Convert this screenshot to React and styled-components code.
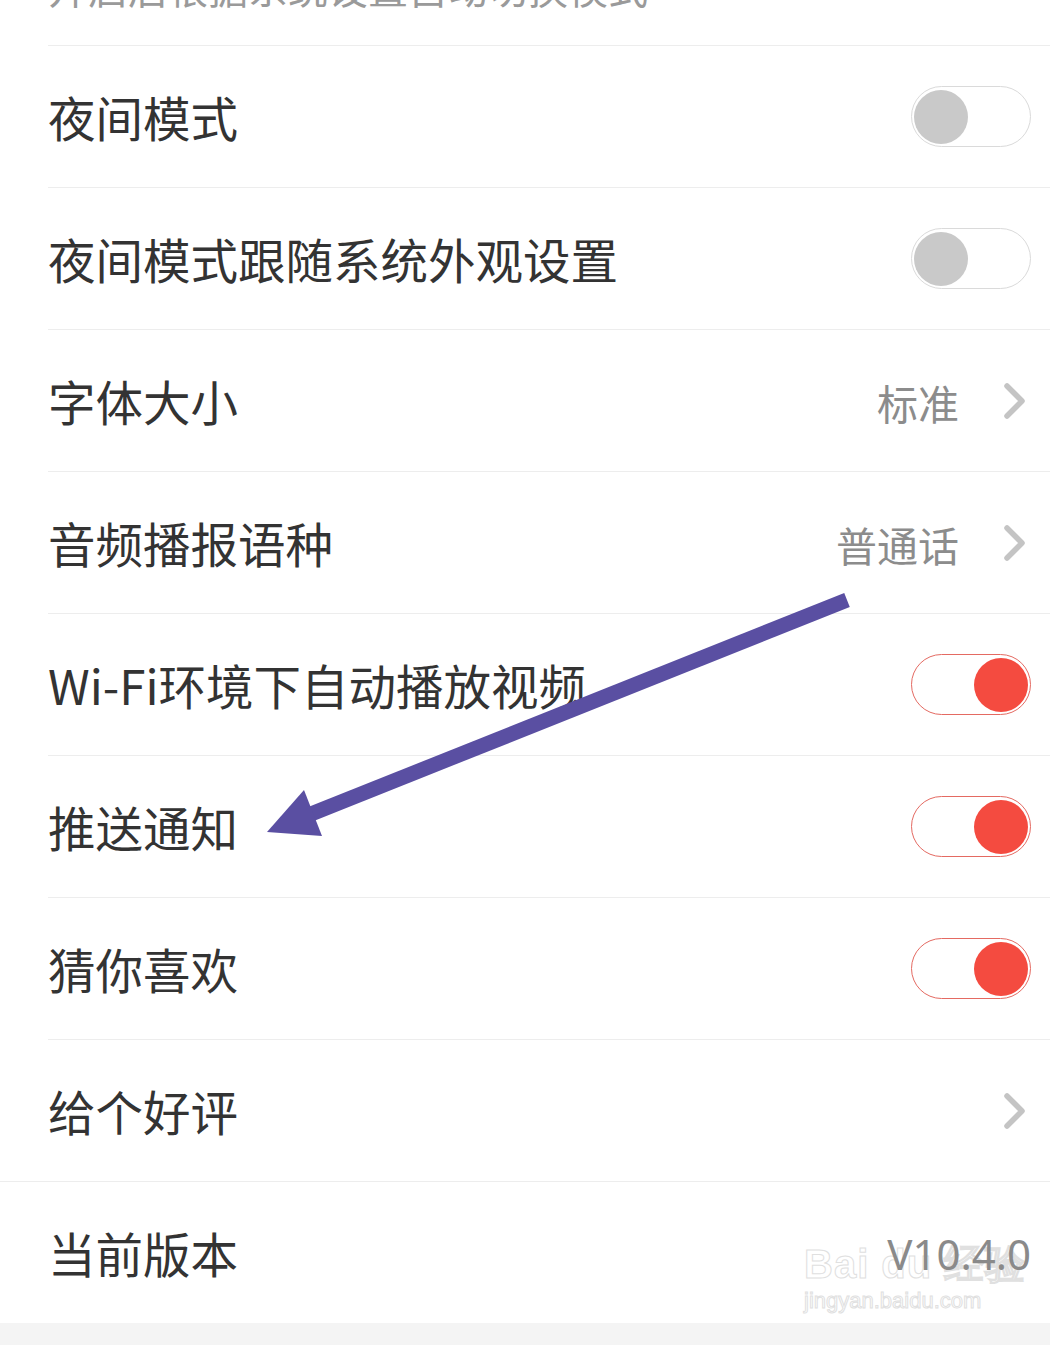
import React from 'react'
import styled, { createGlobalStyle } from 'styled-components'

const GlobalStyle = createGlobalStyle`
  body {
    margin: 0;
    background: #ffffff;
    font-family: 'Noto Sans CJK SC', 'Noto Sans', sans-serif;
  }
`

const Page = styled.div`
  position: relative;
  width: 1050px;
  height: 1345px;
  overflow: hidden;
  background: #ffffff;
  display: flex;
  flex-direction: column;
`

const NoteRow = styled.div`
  height: 45px;
  margin-left: 48px;
  border-bottom: 1px solid #ededed;
  overflow: hidden;
`

const Note = styled.div`
  margin-top: -34px;
  font-size: 40px;
  line-height: 42px;
  color: #9a9a9a;
  white-space: nowrap;
`

const Row = styled.div`
  height: 141px;
  display: flex;
  align-items: center;
  justify-content: space-between;
  margin-left: ${p => (p.$full ? '0' : '48px')};
  padding-left: ${p => (p.$full ? '48px' : '0')};
  padding-right: 19px;
  border-bottom: ${p => (p.$last ? 'none' : '1px solid #ededed')};
  border-top: ${p => (p.$full ? '1px solid #ededed' : 'none')};
`

const Label = styled.span`
  font-size: 47.5px;
  color: #333333;
`

const Side = styled.div`
  display: flex;
  align-items: center;
  gap: 44px;
  padding-right: 4px;
`

const Value = styled.span`
  font-size: 41px;
  color: #8c8c8c;
  margin-top: 2px;
`

const Version = styled.span`
  font-family: 'Noto Sans', sans-serif;
  font-size: 42px;
  color: #8a8a8a;
  margin-top: 2px;
  position: relative;
  z-index: 1;
`

const Track = styled.div`
  box-sizing: border-box;
  width: 120px;
  height: 61px;
  border-radius: 31px;
  border: 1.5px solid ${p => (p.$on ? '#e46a62' : '#dadada')};
  background: #ffffff;
  display: flex;
  align-items: center;
  justify-content: ${p => (p.$on ? 'flex-end' : 'flex-start')};
  padding: 0 2px;
`

const Knob = styled.div`
  width: 54px;
  height: 54px;
  border-radius: 50%;
  background: ${p => (p.$on ? '#f44b40' : '#c9c9c9')};
`

const Footer = styled.div`
  flex: 1;
  background: #f4f4f4;
`

const Arrow = styled.svg`
  position: absolute;
  left: 0;
  top: 0;
  pointer-events: none;
`

const Watermark = styled.div`
  position: absolute;
  left: 804px;
  top: 1240px;
  display: flex;
  flex-direction: column;
  color: rgba(255, 255, 255, 0.3);
  -webkit-text-stroke: 1px #e0e0e0;
  font-family: 'Liberation Sans', sans-serif;
  pointer-events: none;
`

const MarkTop = styled.span`
  font-size: 40px;
  font-weight: bold;
  letter-spacing: 1px;
  line-height: 48px;
`

const MarkUrl = styled.span`
  font-size: 22px;
  line-height: 26px;
`

function Chevron() {
  return (
    <svg width="24" height="36" viewBox="0 0 24 36">
      <path d="M4 3 L19 18 L4 33" fill="none" stroke="#c4c4c4" strokeWidth="5.5" strokeLinecap="round" strokeLinejoin="round" />
    </svg>
  )
}

function Switch({ on }) {
  return (
    <Track $on={on}>
      <Knob $on={on} />
    </Track>
  )
}

export default function App() {
  return (
    <Page>
      <GlobalStyle />
      <NoteRow>
        <Note>开启后根据系统设置自动切换模式</Note>
      </NoteRow>
      <Row>
        <Label>夜间模式</Label>
        <Switch />
      </Row>
      <Row>
        <Label>夜间模式跟随系统外观设置</Label>
        <Switch />
      </Row>
      <Row>
        <Label>字体大小</Label>
        <Side>
          <Value>标准</Value>
          <Chevron />
        </Side>
      </Row>
      <Row>
        <Label>音频播报语种</Label>
        <Side>
          <Value>普通话</Value>
          <Chevron />
        </Side>
      </Row>
      <Row>
        <Label>Wi-Fi环境下自动播放视频</Label>
        <Switch on />
      </Row>
      <Row>
        <Label>推送通知</Label>
        <Switch on />
      </Row>
      <Row>
        <Label>猜你喜欢</Label>
        <Switch on />
      </Row>
      <Row $last>
        <Label>给个好评</Label>
        <Side>
          <Chevron />
        </Side>
      </Row>
      <Row $full $last>
        <Label>当前版本</Label>
        <Version>V10.4.0</Version>
      </Row>
      <Footer />

      <Arrow width="1050" height="1345" viewBox="0 0 1050 1345">
        <line x1="847" y1="600" x2="306" y2="816" stroke="#5a4fa2" strokeWidth="15" />
        <polygon points="267,832 304,790 322,836" fill="#5a4fa2" />
      </Arrow>

      <Watermark>
        <MarkTop>Bai du 经验</MarkTop>
        <MarkUrl>jingyan.baidu.com</MarkUrl>
      </Watermark>
    </Page>
  )
}
